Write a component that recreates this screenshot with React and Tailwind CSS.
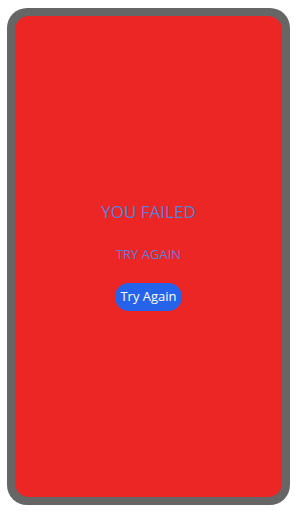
export default function App() {
    return (
        <div className="w-[300px] h-[513px] bg-white pt-[8px] pl-[7px]" style={{ fontFamily: '"Open Sans", "Noto Sans", sans-serif' }}>
            <div className="w-[283px] h-[497px] rounded-[20px] bg-[#666666] p-[8px]">
                <div className="h-full w-full rounded-[14px] bg-[#ec2525] flex flex-col items-center justify-center">
                    <h1 className="text-[17px] leading-none text-[#5b7fd6]">YOU FAILED</h1>
                    <p className="text-[13px] leading-none text-[#5b7fd6] mt-[28px]">TRY AGAIN</p>
                    <button className="mt-[22px] h-[28px] px-[5px] rounded-full bg-[#2563eb] text-white text-[13px] leading-none">
                        Try Again
                    </button>
                </div>
            </div>
        </div>
    );
}
